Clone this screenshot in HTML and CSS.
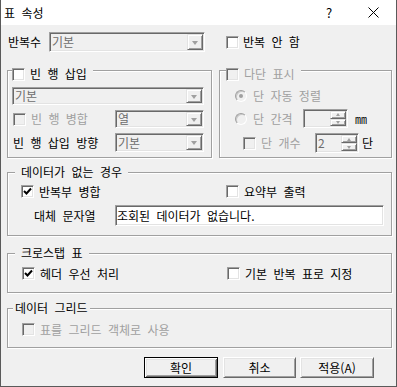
FILE: index.html
```html
<!DOCTYPE html>
<html lang="ko">
<head>
  <meta charset="UTF-8" />
  <title>표 속성</title>
  <link rel="stylesheet" href="styles.css">
</head>
<body>

<div class="dialog">
  <div class="titlebar">
    <span class="title">표 속성</span>
    <span class="help">?</span>
    <svg class="close" width="11" height="11" viewBox="0 0 11 11">
      <path d="M0.5 0.5L10.5 10.5M10.5 0.5L0.5 10.5" stroke="#000" stroke-width="1"/>
    </svg>
  </div>

  <div class="content">
    <div class="top-row">
      <span class="repeat-label">반복수</span>
      <div class="combo combo-main"><span class="combo-text">기본</span><span class="combo-btn"><i class="arrow"></i></span></div>
      <label class="check repeat-off"><span class="box"></span>반복 안 함</label>
    </div>

    <div class="group-row">
      <div class="group group-left">
        <label class="legend check"><span class="box"></span>빈 행 삽입</label>
        <div class="combo combo-wide"><span class="combo-text">기본</span><span class="combo-btn"><i class="arrow"></i></span></div>
        <div class="field-row row-merge">
          <label class="check field-label disabled"><span class="box"></span>빈 행 병합</label>
          <div class="combo combo-small"><span class="combo-text">열</span><span class="combo-btn"><i class="arrow"></i></span></div>
        </div>
        <div class="field-row row-dir">
          <span class="field-label">빈 행 삽입 방향</span>
          <div class="combo combo-small combo-tall"><span class="combo-text">기본</span><span class="combo-btn"><i class="arrow"></i></span></div>
        </div>
      </div>

      <div class="group group-right">
        <label class="legend check disabled"><span class="box"></span>다단 표시</label>
        <div class="col-row col-auto disabled">
          <span class="radio on"></span>단 자동 정렬
        </div>
        <div class="col-row col-gap">
          <span class="radio-label disabled"><span class="radio"></span>단 간격</span>
          <div class="spin spin-gap"><span class="spin-val"></span><span class="spin-btns"><span class="spin-up"><i class="up"></i></span><span class="spin-down"><i class="down"></i></span></span></div>
          <span class="unit">㎜</span>
        </div>
        <div class="col-row col-count">
          <label class="check count-label disabled"><span class="box"></span>단 개수</label>
          <div class="spin spin-count"><span class="spin-val">2</span><span class="spin-btns"><span class="spin-up"><i class="up"></i></span><span class="spin-down"><i class="down"></i></span></span></div>
          <span class="unit-dan">단</span>
        </div>
      </div>
    </div>

    <div class="group group-nodata">
      <span class="legend legend-text">데이터가 없는 경우</span>
      <div class="opt-row">
        <label class="check opt-left"><span class="box checked"><svg width="9" height="9" viewBox="0 0 9 9"><path d="M1 4L3.5 6.5L8 1.5" fill="none" stroke="#000" stroke-width="2"/></svg></span>반복부 병합</label>
        <label class="check"><span class="box"></span>요약부 출력</label>
      </div>
      <div class="text-row">
        <span class="text-label">대체 문자열</span>
        <div class="textbox">조회된 데이터가 없습니다.</div>
      </div>
    </div>

    <div class="group group-cross">
      <span class="legend legend-text">크로스탭 표</span>
      <div class="opt-row">
        <label class="check opt-left"><span class="box checked"><svg width="9" height="9" viewBox="0 0 9 9"><path d="M1 4L3.5 6.5L8 1.5" fill="none" stroke="#000" stroke-width="2"/></svg></span>헤더 우선 처리</label>
        <label class="check"><span class="box"></span>기본 반복 표로 지정</label>
      </div>
    </div>

    <div class="group group-grid">
      <span class="legend legend-tight">데이터 그리드</span>
      <div class="opt-row">
        <label class="check disabled"><span class="box"></span>표를 그리드 객체로 사용</label>
      </div>
    </div>

    <div class="buttons">
      <button class="btn default">확인</button>
      <button class="btn btn-cancel">취소</button>
      <button class="btn btn-apply">적용(A)</button>
    </div>
  </div>
</div>

</body>
</html>
```

FILE: styles.css
```css
body {
  margin: 0;
  background: #f0f0f0;
}
.dialog {
  width: 397px;
  height: 387px;
  box-sizing: border-box;
  border: 1px solid #5a5a5a;
  border-top: none;
  background: #f0f0f0;
  font: 12px/14px "Noto Sans CJK KR", sans-serif;
  word-spacing: 3px;
  color: #000;
  overflow: hidden;
}
.titlebar {
  height: 25px;
  background: #fff;
  display: flex;
  align-items: center;
  padding-left: 3px;
}
.title { flex: 1; }
.help { width: 6px; margin-right: 36px; font-size: 13px; }
.close { margin-right: 17px; }

.content { padding: 7px 0 0 6px; }

/* 3d borders */
.combo, .spin, .textbox, .box {
  box-sizing: border-box;
  border: 1px solid;
  border-color: #a0a0a0 #fff #fff #a0a0a0;
  box-shadow: inset 1px 1px #696969, inset -1px -1px #e3e3e3;
}
.combo-btn, .spin-up, .spin-down {
  box-sizing: border-box;
  border: 1px solid;
  border-color: #e3e3e3 #696969 #696969 #e3e3e3;
  box-shadow: inset 1px 1px #fff, inset -1px -1px #a0a0a0;
  background: #f0f0f0;
  display: flex;
  align-items: center;
  justify-content: center;
}

.combo {
  display: flex;
  padding: 1px;
  background: #f0f0f0;
}
.combo-text { flex: 1; color: #6d6d6d; padding-left: 1px; line-height: 14px; align-self: center; }
.combo-btn { width: 16px; }
.arrow {
  width: 0;
  height: 0;
  border-left: 3.5px solid transparent;
  border-right: 3.5px solid transparent;
  border-top: 4px solid #a0a0a0;
  margin-top: 1px;
}

.check { display: flex; align-items: center; }
.box {
  width: 13px;
  height: 13px;
  background: #fff;
  margin-right: 5px;
  display: flex;
  align-items: center;
  justify-content: center;
  flex: none;
}
.disabled { color: #a0a0a0; }
.disabled .box { background: #f0f0f0; }

.radio {
  width: 12px;
  height: 12px;
  box-sizing: border-box;
  border-radius: 50%;
  border: 1px solid;
  border-color: #a0a0a0 #fff #fff #a0a0a0;
  box-shadow: inset 1px 1px #c8c8c8;
  background: #f0f0f0;
  margin-right: 6px;
  display: flex;
  align-items: center;
  justify-content: center;
  flex: none;
}
.radio.on::after {
  content: "";
  width: 4px;
  height: 4px;
  border-radius: 50%;
  background: #a0a0a0;
}

/* top row */
.top-row { display: flex; align-items: center; height: 20px; }
.repeat-label { width: 42px; padding-left: 1px; box-sizing: border-box; }
.combo-main { width: 156px; height: 20px; }
.repeat-off { margin-left: 21px; }
.repeat-off .box { margin-right: 4px; }

/* groups */
.group {
  position: relative;
  box-sizing: border-box;
  border: 1px solid #a0a0a0;
  box-shadow: inset 1px 1px #fff, 1px 1px #fff;
}
.legend {
  position: absolute;
  background: #f0f0f0;
  height: 14px;
  display: flex;
  align-items: center;
}
.group-row { display: flex; margin-top: 18px; }

.group-left { width: 205px; height: 88px; padding: 16px 0 0 4px; }
.group-left .legend { top: -4px; left: 4px; padding-right: 6px; }
.combo-wide { width: 192px; height: 18px; }
.field-row { display: flex; align-items: center; margin-top: 5px; }
.field-label { width: 103px; padding-left: 1px; box-sizing: border-box; }
.combo-small { width: 89px; height: 18px; }
.combo-tall { height: 19px; }

.group-right { width: 173px; height: 88px; margin-left: 7px; padding: 17px 0 0 15px; }
.group-right .legend { top: -4px; left: 6px; padding-right: 6px; }
.col-row { display: flex; align-items: center; }
.col-auto { height: 16px; }
.col-gap { height: 19px; margin-top: 5px; }
.col-count { height: 20px; margin-top: 5px; }
.radio-label { width: 68px; display: flex; align-items: center; }
.count-label { width: 80px; padding-left: 8px; box-sizing: border-box; }

.spin { display: flex; padding: 1px; background: #f0f0f0; }
.spin-gap { width: 45px; height: 19px; }
.spin-count { width: 44px; height: 20px; }
.spin-val { flex: 1; color: #6d6d6d; padding-left: 1px; align-self: center; }
.spin-btns { width: 16px; display: flex; flex-direction: column; }
.spin-up, .spin-down { flex: 1; }
.up, .down {
  width: 0;
  height: 0;
  border-left: 2.5px solid transparent;
  border-right: 2.5px solid transparent;
}
.up { border-bottom: 3px solid #a0a0a0; }
.down { border-top: 3px solid #a0a0a0; }
.unit { margin-left: 7px; }
.unit-dan { margin-left: 3px; }

.legend-text { top: -8px; left: 7px; padding: 0 6px; }
.legend-tight { top: -8px; left: 5px; padding: 0 2px; }

.group-nodata { width: 385px; height: 64px; margin-top: 14px; padding: 12px 0 0 13px; }
.opt-row { display: flex; align-items: center; height: 13px; }
.opt-left { width: 205px; }
.text-row { display: flex; align-items: center; margin-top: 7px; height: 21px; }
.text-label { width: 94px; padding-left: 13px; box-sizing: border-box; }
.textbox {
  width: 269px;
  height: 21px;
  background: #fff;
  padding: 1px 0 0 1px;
  line-height: 17px;
}

.group-cross { width: 385px; height: 40px; margin-top: 17px; padding: 13px 0 0 14px; }
.group-cross .opt-left { width: 205px; }

.group-grid { width: 385px; height: 40px; margin-top: 15px; padding: 14px 0 0 14px; }

/* buttons */
.buttons { display: flex; margin-top: 9px; padding-left: 137px; }
.btn {
  height: 21px;
  box-sizing: border-box;
  border: 1px solid;
  border-color: #fff #696969 #696969 #fff;
  box-shadow: inset 1px 1px #e3e3e3, inset -1px -1px #a0a0a0;
  background: #f0f0f0;
  font: 12px/14px "Noto Sans CJK KR", sans-serif;
  word-spacing: 3px;
  color: #000;
  padding: 0;
}
.btn.default {
  width: 74px;
  border: 1px solid #000;
  box-shadow: inset 1px 1px #fff, inset -1px -1px #696969, inset 2px 2px #e3e3e3, inset -2px -2px #a0a0a0;
}
.btn-cancel { width: 73px; margin-left: 5px; }
.btn-apply { width: 74px; margin-left: 4px; }
```
